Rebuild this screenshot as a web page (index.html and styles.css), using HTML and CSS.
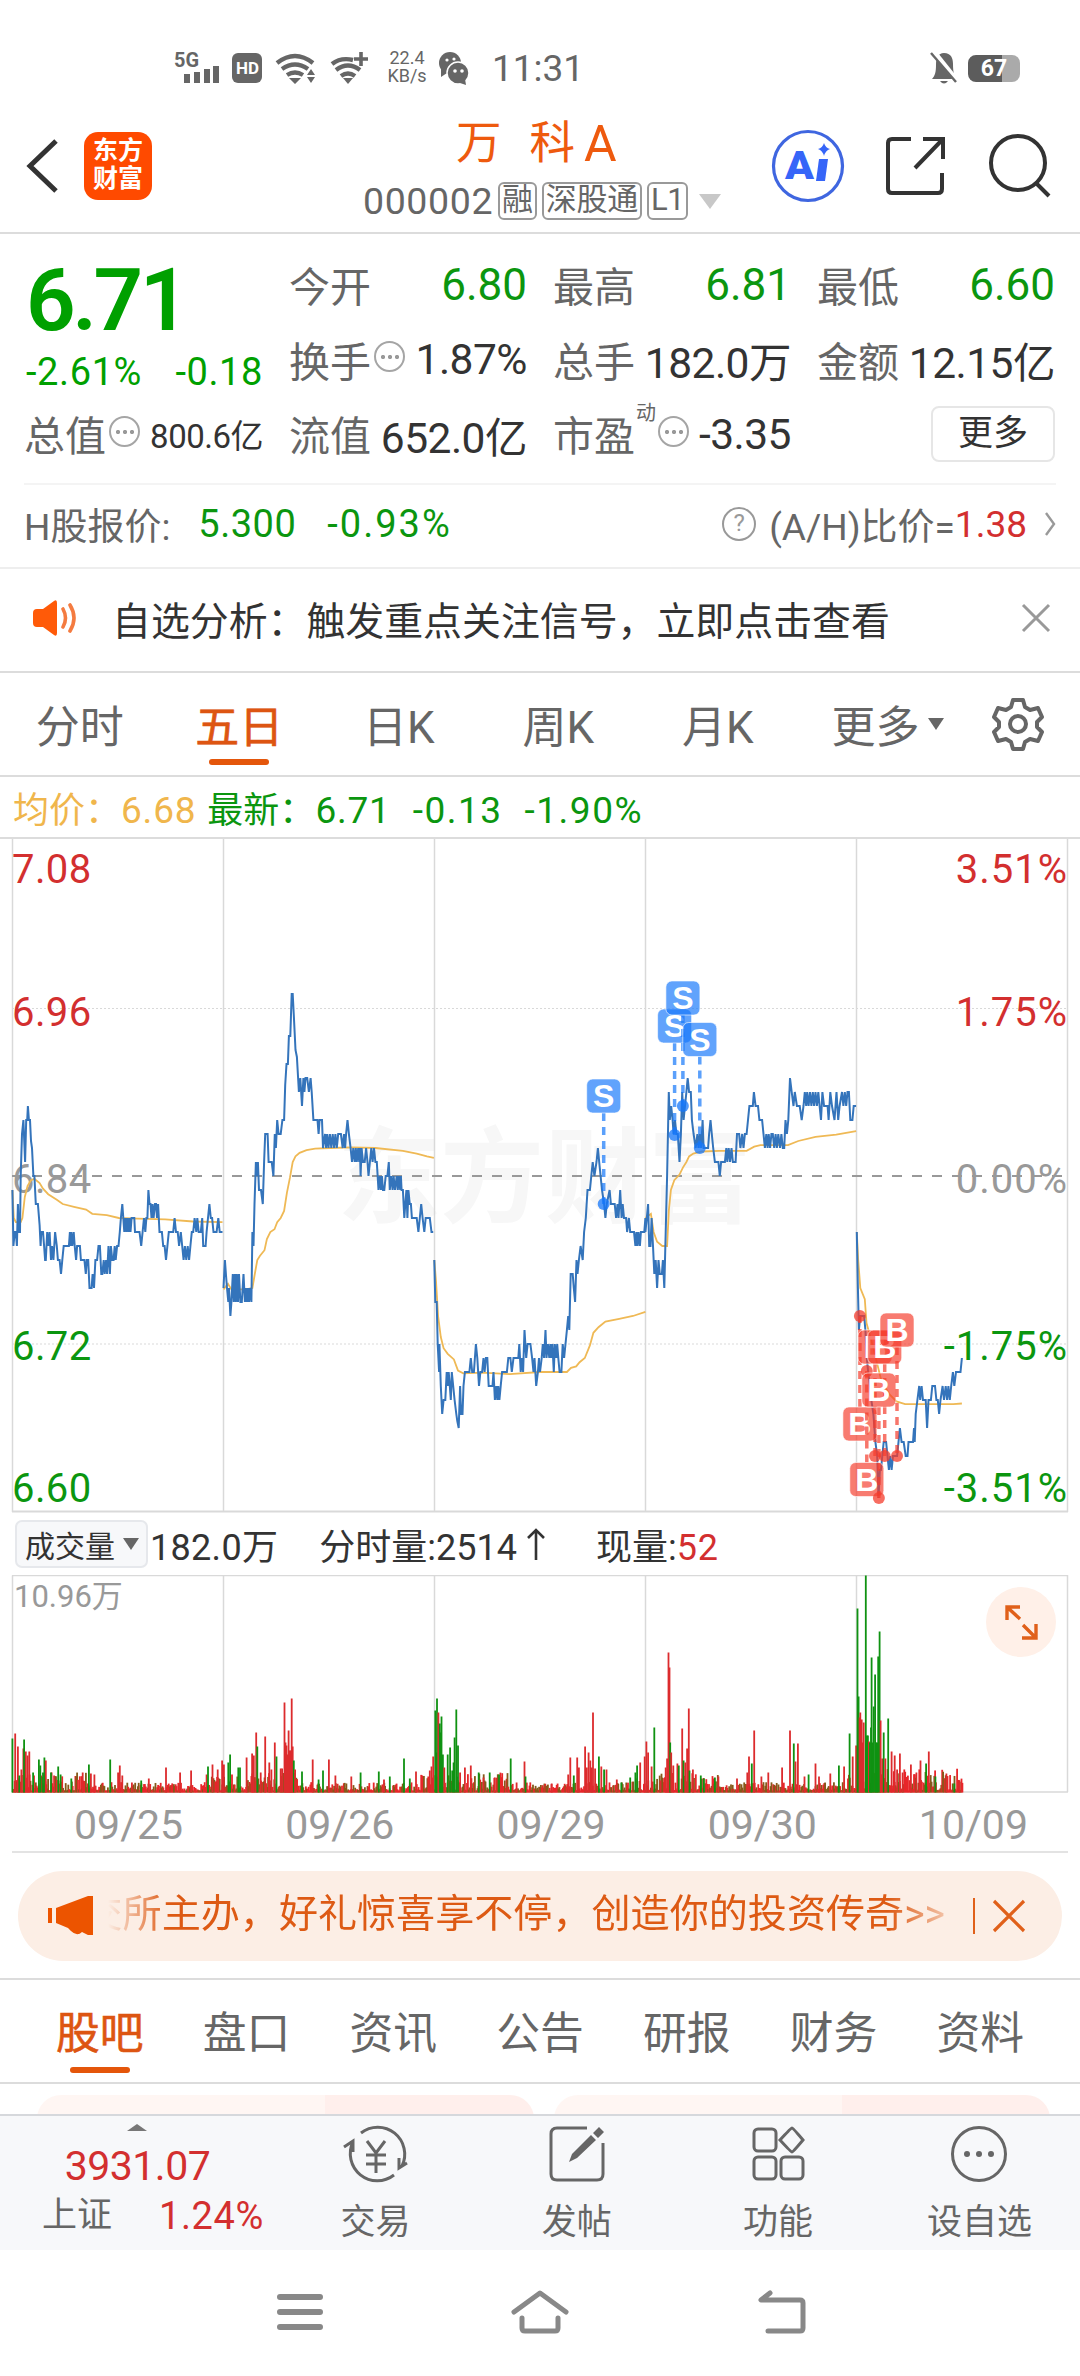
FILE: index.html
```
<!DOCTYPE html>
<html lang="zh-CN">
<head>
    <meta charset="UTF-8">
    <meta name="viewport" content="width=device-width, initial-scale=1.0">
    <title>万 科A 000002</title>
    <link rel="stylesheet" href="styles.css">
</head>
<body>
    <!-- Status bar -->
    <div class="status">
        <svg class="status-icons" width="146" height="36" viewBox="0 0 146 36" fill="#666">
            <text x="0" y="15" font-size="20" font-weight="700" textLength="25" lengthAdjust="spacingAndGlyphs">5G</text>
            <path d="M10 22h6v9h-6zM20 20h6v11h-6zM30 17h6v14h-6zM39 14h6v17h-6z"/>
            <rect x="58" y="1" width="30" height="30" rx="6"/>
            <text x="62" y="22" font-size="17" font-weight="700" fill="#fff" textLength="23" lengthAdjust="spacingAndGlyphs">HD</text>
            <path d="M103 11q18-14 36 0M108 17q13-9 26 0M113 23q8-5 16 0" fill="none" stroke="#666" stroke-width="4.4"/>
            <path d="M115 26h12l-6 6zM133 23l4-6 4 6zM133 25l4 6 4-6z"/>
        </svg>
        <svg class="status-wifi" width="40" height="36" viewBox="0 0 40 36">
            <path d="M2 12q9-7 21-4M6 18q12-9 24 0M11 24q7-5 14 0" fill="none" stroke="#666" stroke-width="4.4"/>
            <path d="M13 26h10l-5 6z" fill="#666"/>
            <path d="M31 0v14M24 7h14" stroke="#666" stroke-width="3.6"/>
        </svg>
        <div class="status-speed"><span>22.4</span><span>KB/s</span></div>
        <svg class="status-wechat" width="32" height="34" viewBox="0 0 32 34">
            <path d="M3 16v9l6-4z" fill="#666"/>
            <circle cx="12" cy="11" r="11" fill="#666"/>
            <circle cx="20" cy="21" r="11" fill="#666" stroke="#fff" stroke-width="1.5"/>
            <path d="M22 31l6 2-1-6z" fill="#666"/>
            <g fill="#fff"><circle cx="9" cy="8" r="1.6"/><circle cx="16" cy="7" r="1.6"/><circle cx="17" cy="19" r="1.8"/><circle cx="24" cy="19" r="1.8"/></g>
        </svg>
        <span class="status-time">11:31</span>
        <svg class="status-bell" width="30" height="34" viewBox="0 0 30 34">
            <path d="M14 1c7 0 9 5 9 11 0 8 1 12 4 15H2c3-3 4-7 4-14C6 6 8 1 14 1zM10 29h8q-4 5-8 0z" fill="#666"/>
            <path d="M4 0l24 30" stroke="#fff" stroke-width="5"/>
            <path d="M1 1l25 29" stroke="#666" stroke-width="2.4"/>
        </svg>
        <div class="battery">67</div>
    </div>

    <!-- Header -->
    <header class="header">
        <svg class="back" width="34" height="58" viewBox="0 0 34 58"><path d="M30 4L4 29l26 25" fill="none" stroke="#333" stroke-width="5"/></svg>
        <div class="brand">东方<br>财富</div>
        <div class="title">
            <h1>万<i></i>科<b>A</b></h1>
            <div class="code">000002<span class="tag">融</span><span class="tag">深股通</span><span class="tag">L1</span><span class="caret"></span></div>
        </div>
        <div class="header-actions">
            <svg width="74" height="74" viewBox="0 0 74 74">
                <circle cx="37" cy="37" r="34.5" fill="#fff" stroke="#3f66e0" stroke-width="3.2"/>
                <text x="14" y="50" font-size="39" font-weight="900" fill="#3665f8" textLength="29" lengthAdjust="spacingAndGlyphs">A</text>
                <path d="M48 30h9l-3 22h-9z" fill="#3665f8"/>
                <path d="M53 14q1.500 5 6 6-4.500 1.500-6 7-1.500-5.500-6-7 4.500-1 6-6z" fill="#3665f8"/>
            </svg>
            <svg width="62" height="62" viewBox="0 0 62 62" fill="none" stroke="#333" stroke-width="4">
                <path d="M26 4H7q-4 0-4 4v46q0 4 4 4h46q4 0 4-4V38M38 4h20v20M57 5L30 33"/>
            </svg>
            <svg width="66" height="66" viewBox="0 0 66 66" fill="none" stroke="#333" stroke-width="4">
                <circle cx="31" cy="30" r="27"/><path d="M49 50l13 13"/>
            </svg>
        </div>
    </header>

    <!-- Quote panel -->
    <section class="quote">
        <div class="price-box">
            <div class="price">6.71</div>
            <div class="change"><span>-2.61%</span><span>-0.18</span></div>
        </div>
        <div class="cell"><span class="label">今开</span><span class="num green">6.80</span></div>
        <div class="cell"><span class="label">最高</span><span class="num green">6.81</span></div>
        <div class="cell"><span class="label">最低</span><span class="num green">6.60</span></div>
        <div class="cell"><span class="label">换手<i class="dots"></i></span><span class="num">1.87%</span></div>
        <div class="cell"><span class="label">总手</span><span class="num">182.0万</span></div>
        <div class="cell"><span class="label">金额</span><span class="num">12.15亿</span></div>
        <div class="cell"><span class="label">总值<i class="dots"></i></span><span class="num small">800.6亿</span></div>
        <div class="cell"><span class="label">流值</span><span class="num">652.0亿</span></div>
        <div class="cell"><span class="label">市盈<sup>动</sup><i class="dots"></i></span><span class="num">-3.35</span></div>
        <div class="cell end"><button class="more-btn">更多</button></div>
    </section>

    <!-- H share row -->
    <div class="hshare">
        <span>H股报价:</span>
        <span class="green h-price">5.300</span>
        <span class="green h-pct">-0.93%</span>
        <span class="ratio"><i class="help">?</i>(A/H)比价=<em>1.38</em></span>
        <svg width="12" height="26" viewBox="0 0 12 26"><path d="M2 2l8 11-8 11" fill="none" stroke="#999" stroke-width="2.4"/></svg>
    </div>

    <!-- Notice -->
    <div class="notice">
        <svg width="48" height="38" viewBox="0 0 48 38">
            <path d="M1 14q0-4 4-4h6L22 2q3-2 3 2v30q0 4-3 2l-11-8H5q-4 0-4-4z" fill="#ff5a08"/>
            <path d="M31 10q5 9 0 18M38 6q8 13 0 26" fill="none" stroke="#f47b40" stroke-width="3.6" stroke-linecap="round"/>
        </svg>
        <span class="notice-text">自选分析：触发重点关注信号，立即点击查看</span>
        <svg width="32" height="32" viewBox="0 0 32 32"><path d="M3 3l26 26M29 3L3 29" stroke="#999" stroke-width="3"/></svg>
    </div>

    <!-- Period tabs -->
    <nav class="periods">
        <div class="period"><span class="active">分时</span></div>
        <div class="period"><span class="active on">五日</span></div>
        <div class="period">日K</div>
        <div class="period">周K</div>
        <div class="period">月K</div>
        <div class="drop">更多</div>
        <svg width="54" height="54" viewBox="0 0 54 54" fill="none" stroke="#666" stroke-width="4" stroke-linejoin="round">
            <path d="M22 3h10l2 7 5 3 8-2 4 9-5 5v5l5 5-4 9-8-2-5 3-2 7H22l-2-7-5-3-8 2-4-9 5-5v-5l-5-5 4-9 8 2 5-3z"/>
            <circle cx="27" cy="27" r="8"/>
        </svg>
    </nav>

    <div class="summary">
        <span class="avg">均价：<b>6.68</b></span>
        <span class="green">最新：<b>6.71</b><b>-0.13</b><b>-1.90%</b></span>
    </div>

    <!-- Price chart -->
    <svg class="chart" id="priceChart" width="1080" height="674" viewBox="0 0 1080 674">
        <g class="watermark"><text x="337" y="376">东</text><text x="440" y="376">方</text><text x="545" y="376">财</text><text x="648" y="376">富</text></g>
        <path class="grid" d="M12.500 0V673M223.500 0V673M434.500 0V673M645.500 0V673M856.500 0V673M1067.500 0V673"/>
        <path class="grid bottom" d="M12 672.500H1068"/>
        <path class="grid dotted" d="M12 169.500H1068M12 505H1068"/>
        <g class="axis">
            <text class="up" x="12" y="44">7.08</text>
            <text class="up" x="12" y="187">6.96</text>
            <text class="flat" x="12" y="354">6.84</text>
            <text class="down" x="12" y="521">6.72</text>
            <text class="down" x="12" y="663">6.60</text>
        </g>
        <g class="axis right">
            <text class="up" x="1068" y="44">3.51%</text>
            <text class="up" x="1068" y="187">1.75%</text>
            <text class="flat" x="1068" y="354">0.00%</text>
            <text class="down" x="1068" y="521">-1.75%</text>
            <text class="down" x="1068" y="663">-3.51%</text>
        </g>
        <path class="zero" d="M12 337H1068"/>
    </svg>

    <!-- Volume -->
    <div class="vol-head">
        <span class="vol-btn">成交量</span>
        <span class="v1">182.0万</span>
        <span class="v2">分时量:2514</span>
        <svg width="20" height="34" viewBox="0 0 20 34"><path d="M10 33V3M2 11l8-8 8 8" fill="none" stroke="#333" stroke-width="2.600"/></svg>
        <span class="v3">现量:<em>52</em></span>
    </div>
    <div class="volume">
        <svg class="chart" id="volumeChart" width="1080" height="218" viewBox="0 0 1080 218">
            <path class="grid" d="M12.500 .5V217M223.500 0V217M434.500 0V217M645.500 0V217M856.500 0V217M1067.500 0V217M12 .5H1068M12 217H1068"/>
            <text class="vol-max" x="14" y="32">10.96万</text>
        </svg>
        <div class="expand">
            <svg width="36" height="36" viewBox="0 0 36 36" fill="none" stroke="#e0601a" stroke-width="3.400">
                <path d="M17 3H4v13M4 3l13 12M19 34h14V20M33 34L20 21"/>
            </svg>
        </div>
    </div>
    <div class="dates"><span>09/25</span><span>09/26</span><span>09/29</span><span>09/30</span><span>10/09</span></div>

    <!-- Promo banner -->
    <div class="banner">
        <svg width="46" height="42" viewBox="0 0 46 42" fill="#ec5400"><path d="M0 13h4v15H0zM8 13L40 1h5v39h-5l-6-3q-5 5-11-1l-3-3-12-5z"/></svg>
        <div class="marquee"><span>交所主办，好礼惊喜享不停，创造你的投资传奇&gt;&gt;</span></div>
        <i class="bar"></i>
        <svg width="34" height="34" viewBox="0 0 34 34"><path d="M2 2l30 30M32 2L2 32" stroke="#e0601a" stroke-width="3.200"/></svg>
    </div>

    <!-- Content tabs -->
    <nav class="tabs">
        <span class="active on">股吧</span>
        <span>盘口</span>
        <span>资讯</span>
        <span>公告</span>
        <span>研报</span>
        <span>财务</span>
        <span>资料</span>
    </nav>
    <div class="cards"><div class="card"></div><div class="card"></div></div>

    <!-- Bottom bar -->
    <footer class="toolbar">
        <div class="index">
            <i class="up-caret"></i>
            <div class="index-value">3931.07</div>
            <div class="index-row"><span>上证</span><em>1.24%</em></div>
        </div>
        <div class="tool">
            <svg width="70" height="62" viewBox="0 0 70 62" fill="none" stroke="#666" stroke-width="3">
                <path d="M20 10A27 27 0 0 1 61 43M53 52A27 27 0 0 1 12 19M3 24l9-6v11M58 35v10l8-5"/>
                <path d="M26 18l9 12 9-12M35 30v20M25 32h20M25 41h20"/>
            </svg>
            <span>交易</span>
        </div>
        <div class="tool">
            <svg width="60" height="62" viewBox="0 0 60 62" fill="none" stroke="#666" stroke-width="3">
                <path d="M40 5H10q-6 0-6 6v40q0 6 6 6h40q6 0 6-6V20"/>
                <path d="M22 39l3-8L44 12l5 5-19 18zM46 10l6-6 5 5-6 6z" fill="#666" stroke="none"/>
            </svg>
            <span>发帖</span>
        </div>
        <div class="tool">
            <svg width="56" height="62" viewBox="0 0 56 62" fill="none" stroke="#666" stroke-width="3">
                <rect x="4" y="6" width="22" height="22" rx="4"/>
                <rect x="4" y="34" width="22" height="22" rx="4"/>
                <rect x="31" y="34" width="22" height="22" rx="4"/>
                <path d="M42 5q1 0 11 12-10 12-11 12-1 0-12-12Q41 5 42 5z"/>
            </svg>
            <span>功能</span>
        </div>
        <div class="tool">
            <svg width="60" height="62" viewBox="0 0 60 62">
                <circle cx="30" cy="31" r="26.500" fill="none" stroke="#666" stroke-width="3"/>
                <g fill="#666"><circle cx="18" cy="31" r="3"/><circle cx="30" cy="31" r="3"/><circle cx="42" cy="31" r="3"/></g>
            </svg>
            <span>设自选</span>
        </div>
    </footer>

    <!-- System navigation -->
    <div class="sysnav">
        <svg width="48" height="44" viewBox="0 0 48 44"><path d="M4 7h40M4 22h40M4 37h40" stroke="#888" stroke-width="6" stroke-linecap="round"/></svg>
        <svg width="60" height="46" viewBox="0 0 60 46" fill="none" stroke="#888" stroke-width="5" stroke-linecap="round" stroke-linejoin="round"><path d="M4 23L30 4l26 19M12 29v10q0 3 3 3h30q3 0 3-3V29"/></svg>
        <svg width="50" height="46" viewBox="0 0 50 46" fill="none" stroke="#888" stroke-width="5" stroke-linecap="round" stroke-linejoin="round"><path d="M14 4L5 11h39q3 0 3 3v25q0 3-3 3H12"/></svg>
    </div>

    <script src="charts.js"></script>
</body>
</html>
```
FILE: styles.css
```
:root {
    --text: #333;
    --muted: #666;
    --grey: #999;
    --orange: #e4560b;
    --green: #0b960f;
    --red: #d32f2f;
    --line: #dcdcdc;
}

* {
    margin: 0;
    padding: 0;
    box-sizing: border-box;
}

body {
    width: 1080px;
    height: 2376px;
    font-family: Roboto, "Noto Sans CJK SC", sans-serif;
    background: #fff;
    color: var(--text);
    overflow: hidden;
}

svg {
    display: block;
    flex: none;
}

i, em {
    font-style: normal;
}

em {
    color: var(--red);
}

.green {
    color: var(--green);
}

/* Status bar */
.status {
    height: 110px;
    padding: 52px 60px 0 174px;
    display: flex;
    align-items: flex-start;
    color: var(--muted);
}

.status-wifi {
    margin-left: 10px;
}

.status-speed {
    display: flex;
    flex-direction: column;
    width: 40px;
    margin-left: 17px;
    font-size: 18px;
    line-height: 18px;
    margin-top: -3px;
    text-align: center;
}

.status-wechat {
    margin-left: 11px;
}

.status-time {
    margin-left: 22px;
    font-size: 37px;
    line-height: 34px;
}

.status-bell {
    margin-left: auto;
}

.battery {
    width: 52px;
    height: 27px;
    margin: 3px 0 0 8px;
    border-radius: 8px;
    background: linear-gradient(90deg, #5c5c5c 66%, #aaa 66%);
    color: #fff;
    font-size: 23px;
    font-weight: 700;
    line-height: 28px;
    text-align: center;
}

/* Header */
.header {
    height: 124px;
    display: flex;
    align-items: center;
    padding: 0 27px 10px 26px;
    border-bottom: 2px solid var(--line);
}

.brand {
    width: 68px;
    height: 68px;
    margin-left: 24px;
    border-radius: 14px;
    background: #ff4a00;
    color: #fff;
    font-size: 25px;
    font-weight: 700;
    line-height: 28px;
    text-align: center;
    padding-top: 5px;
}

.title {
    width: 380px;
    margin-left: 211px;
    align-self: flex-start;
    white-space: nowrap;
}

.title h1 {
    display: flex;
    height: 68px;
    padding-left: 93px;
    color: #ee5a0e;
    font-size: 45.5px;
    font-weight: 400;
    line-height: 68px;
}

.title h1 i {
    width: 28px;
}

.title h1 b {
    font-weight: 400;
    margin-left: 9px;
    font-size: 50px;
}

.code {
    display: flex;
    align-items: center;
    height: 46px;
    font-size: 37.5px;
    letter-spacing: .6px;
    color: var(--muted);
}

.tag {
    height: 38px;
    margin-left: 5px;
    padding: 0 2px;
    border: 2px solid #999;
    border-radius: 6px;
    font-size: 31px;
    line-height: 32px;
    letter-spacing: -.3px;
}

.caret {
    margin-left: 11px;
    border: 11px solid transparent;
    border-top: 15px solid #c8c8c8;
    border-bottom: 0;
}

.header-actions {
    display: flex;
    align-items: center;
    gap: 40px;
    margin-left: auto;
}

/* Quote panel */
.quote {
    display: grid;
    grid-template-columns: 239px 238px 238px 238px;
    grid-template-rows: repeat(3, 74.5px);
    column-gap: 26px;
    height: 249px;
    padding: 14px 24px 0;
}

.price-box {
    grid-row: 1 / 3;
    color: #00a000;
}

.price {
    height: 99px;
    padding-left: 2px;
    font-size: 87px;
    font-weight: 600;
    line-height: 104px;
    letter-spacing: -3.5px;
}

.change {
    display: flex;
    justify-content: space-between;
    padding-left: 2px;
    font-size: 38px;
    line-height: 50px;
    letter-spacing: .6px;
}

.cell {
    display: flex;
    align-items: center;
    justify-content: space-between;
    white-space: nowrap;
}

.cell.end {
    justify-content: flex-end;
}

.label {
    display: flex;
    align-items: center;
    padding-bottom: 2px;
    color: var(--muted);
    font-size: 41px;
}

.label sup {
    align-self: flex-start;
    font-size: 20px;
    line-height: 20px;
    margin: 0 0 0 1px;
}

.label sup + .dots {
    margin-left: 2px;
}

.dots {
    width: 31px;
    height: 31px;
    margin: -4px 0 0 3px;
    border: 2px solid #a5a5a5;
    border-radius: 50%;
    background:
        radial-gradient(circle at 7px 14px, #999 1.8px, transparent 2.4px),
        radial-gradient(circle at 14px 14px, #999 1.8px, transparent 2.4px),
        radial-gradient(circle at 21px 14px, #999 1.8px, transparent 2.4px);
}

.num {
    font-size: 42.5px;
    letter-spacing: -.5px;
}

.num.green {
    font-size: 44px;
    letter-spacing: 0;
}

.num.small {
    font-size: 33px;
}

.more-btn {
    width: 124px;
    height: 56px;
    border: 2px solid #e6e6e6;
    border-radius: 8px;
    background: #fff;
    color: var(--text);
    font-family: inherit;
    font-size: 35px;
    line-height: 50px;
}

/* H share row */
.hshare {
    display: flex;
    align-items: center;
    height: 84px;
    margin: 0 24px;
    padding-bottom: 4px;
    border-top: 2px solid #f4f4f4;
    color: var(--muted);
    font-size: 37px;
}

.h-price {
    margin-left: 28px;
    font-size: 38px;
    letter-spacing: .5px;
}

.h-pct {
    margin-left: 31px;
    font-size: 38px;
    letter-spacing: 2px;
}

.ratio {
    display: flex;
    align-items: center;
    margin: 0 17px 0 auto;
}

.help {
    width: 34px;
    height: 34px;
    margin-right: 13px;
    border: 2.5px solid var(--grey);
    border-radius: 50%;
    color: var(--grey);
    font-size: 24px;
    line-height: 29px;
    text-align: center;
}

/* Notice */
.notice {
    display: flex;
    align-items: center;
    height: 106px;
    padding: 0 28px 4px 32px;
    border-top: 2px solid #eee;
    border-bottom: 2px solid var(--line);
    font-size: 38.9px;
}

.notice-text {
    flex: 1;
    margin-left: 32px;
}

/* Period tabs */
.periods {
    display: flex;
    align-items: center;
    height: 104px;
    border-bottom: 2px solid var(--line);
    color: var(--muted);
    font-size: 44px;
}

.period {
    width: 159.5px;
    text-align: center;
}

.periods svg {
    margin-left: 47px;
}

.active {
    position: relative;
}

.on {
    color: #dd5512;
    -webkit-text-stroke: .6px #dd5512;
}

.on::after {
    content: '';
    position: absolute;
    left: 50%;
    bottom: -11px;
    width: 60px;
    height: 6px;
    margin-left: -30px;
    border-radius: 3px;
    background: var(--orange);
}

.drop {
    display: flex;
    align-items: center;
    margin-left: 34px;
}

.drop::after,
.vol-btn::after {
    content: '';
    margin-left: 8px;
    border: 8px solid transparent;
    border-top: 12px solid #666;
    border-bottom: 0;
}

.summary {
    display: flex;
    align-items: center;
    gap: 11px;
    height: 62px;
    padding-left: 13px;
    border-bottom: 2px solid var(--line);
    font-size: 36px;
}

.summary b {
    font-weight: 400;
    font-size: 37px;
    letter-spacing: .8px;
}

.summary b + b {
    margin-left: 22px;
    letter-spacing: 1.5px;
}

.avg {
    color: #f0b64c;
}

/* Charts */
.chart .grid {
    fill: none;
    stroke: #d9d9d9;
    stroke-width: 1.5;
}

.chart .bottom {
    stroke-width: 2;
}

.chart .dotted {
    stroke-width: 1;
    stroke-dasharray: 2 2;
}

.chart .zero {
    stroke: #999;
    stroke-width: 2;
    stroke-dasharray: 10 10;
}

.watermark {
    font-size: 104px;
    font-weight: 700;
    fill: #f7f7f7;
}

.axis {
    font-size: 40px;
    letter-spacing: .4px;
}

.right {
    text-anchor: end;
    letter-spacing: 1px;
}

.up { fill: var(--red); }
.down { fill: var(--green); }
.flat { fill: #999; }

.price-line {
    fill: none;
    stroke: #3474bb;
    stroke-width: 2;
}

.avg-line {
    fill: none;
    stroke: #efb955;
    stroke-width: 1.8;
}

.mark-s { fill: #1677fa; stroke: #1677fa; }
.mark-b { fill: #f43c2c; stroke: #f43c2c; }

.mark-box {
    fill-opacity: .68;
    stroke: #fff;
    stroke-opacity: .6;
}

.mark-dot {
    fill-opacity: .75;
    stroke: none;
}

.mark-line {
    stroke-width: 3.5;
    stroke-opacity: .7;
    stroke-dasharray: 8 6;
}

.mark-text {
    fill: #fff;
    stroke: none;
    font-family: "Liberation Sans", sans-serif;
    font-size: 32px;
    font-weight: 700;
    text-anchor: middle;
}

/* Volume */
.vol-head {
    display: flex;
    align-items: center;
    height: 62px;
    padding-left: 15px;
    font-size: 36px;
    white-space: nowrap;
}

.vol-btn {
    display: flex;
    align-items: center;
    width: 133px;
    height: 48px;
    padding-left: 8px;
    border: 2px solid #e6e8ec;
    border-radius: 7px;
    background: #f7f8fa;
    font-size: 30px;
}

.v1 {
    margin-left: 2px;
    letter-spacing: .3px;
}

.v2 {
    margin-left: 41px;
}

.v3 {
    margin-left: 50px;
}

.v3 em {
    letter-spacing: 1px;
}

.vol-head svg {
    margin-left: 9px;
}

.volume {
    position: relative;
    height: 218px;
}

.vol-max {
    fill: #999;
    font-size: 31px;
}

.expand {
    position: absolute;
    right: 24px;
    top: 12px;
    display: flex;
    align-items: center;
    justify-content: center;
    width: 70px;
    height: 70px;
    border-radius: 50%;
    background: #fff0e8;
}

.dates {
    display: flex;
    height: 60px;
    margin: 0 12px;
    border-bottom: 2px solid #e3e3e3;
    color: var(--grey);
    font-size: 41px;
    line-height: 64px;
}

.dates span {
    flex: 1;
    padding-left: 22px;
    text-align: center;
}

/* Promo banner */
.banner {
    display: flex;
    align-items: center;
    height: 90px;
    margin: 18px 18px 17px;
    padding: 0 36px 0 30px;
    border-radius: 45px;
    background: #fceee5;
    color: #dd5a14;
    font-size: 39.1px;
}

.marquee {
    display: flex;
    justify-content: flex-end;
    width: 838px;
    height: 90px;
    margin-left: 14px;
    overflow: hidden;
    line-height: 86px;
    white-space: nowrap;
    -webkit-mask-image: linear-gradient(90deg, transparent, #000 60px, #000 780px, rgba(0, 0, 0, .3));
    mask-image: linear-gradient(90deg, transparent, #000 60px, #000 780px, rgba(0, 0, 0, .3));
}

.banner .bar {
    width: 2px;
    height: 36px;
    margin: 0 17px 0 28px;
    background: #e0601a;
}

/* Content tabs */
.tabs {
    display: flex;
    justify-content: space-between;
    align-items: center;
    height: 106px;
    padding: 0 56px 3px;
    border-top: 2px solid var(--line);
    border-bottom: 2px solid var(--line);
    color: var(--muted);
    font-size: 43.8px;
}

.cards {
    display: flex;
    gap: 20px;
    height: 30px;
    padding: 11px 30px 0 37px;
    overflow: hidden;
}

.card {
    width: 497px;
    height: 60px;
    border-radius: 24px;
    background: linear-gradient(90deg, #fff6f3 58%, #ffefec 58%);
}

/* Bottom bar */
.toolbar {
    display: flex;
    height: 136px;
    border-top: 2px solid #d6d8dc;
    background: #f7f8fa;
    color: var(--muted);
    font-size: 35px;
}

.index {
    display: flex;
    flex-direction: column;
    align-items: center;
    width: 275px;
    padding-top: 8px;
}

.up-caret {
    border: 10px solid transparent;
    border-bottom: 7px solid #777;
    border-top: 0;
}

.index-value {
    color: var(--red);
    font-size: 41px;
    line-height: 46px;
    margin-top: 12px;
    letter-spacing: -.5px;
}

.index-row {
    display: flex;
    gap: 47px;
    line-height: 54px;
    padding-left: 31px;
}

.index-row em {
    font-size: 38px;
    letter-spacing: .6px;
}

.tool {
    display: flex;
    flex-direction: column;
    align-items: center;
    width: 201.3px;
    padding-top: 7px;
}

.tool span {
    margin-top: 14px;
    line-height: 48px;
}

/* System navigation */
.sysnav {
    display: flex;
    justify-content: space-between;
    align-items: center;
    height: 126px;
    padding: 0 274px 2px 276px;
}
```
FILE: charts.js
```
// Every series is a list of "x:value" pairs. x counts along half of the
// canvas (1568 units for 540px), prices are cents above 6.00.
const UNIT = 540 / 1568;
const NS = 'http://www.w3.org/2000/svg';

const priceLines = [
    [0, '36:83 39:79 43:80 46:80 49:79 52:82 55:80 58:80 60:84 64:87 68:88 73:85 76:88 79:88 81:89 84:88 87:88 90:86.5 93:86 97:84 100:84 104:82 110:82 115:80.5 118:79 120:80 125:80 128:79 131:78 133:78 137:80 140:79 144:80 148:78 151:79 155:78 160:80 165:79 168:78 173:78 177:77 181:78 185:79 200:79 203:80 205:79 207:80 210:79 214:80 217:79 221:78 224:79 232:79 235:78 245:78 249:77 252:78 256:78 260:76 266:76 269:77 273:76 277:78 282:78 286:79 290:79 294:77 297:77 301:78 304:77 308:78 311:77 315:79 319:77 322:79 326:78 330:78 333:79 336:78 340:79 344:79 348:80 351:81 355:82 358:81 361:80 364:81 367:80 370:81 373:80 376:81 379:80 382:81 386:81 390:81 392:80 405:80 410:79 414:80 418:81 422:80 425:81 428:81 431:83 434:82 437:82 440:81 443:82 446:81 450:82 453:82 456:81 459:82 463:80 470:80 474:79 478:79 482:78 486:79 490:80 503:80 507:81 511:80 516:80 520:79 525:80 529:79 533:78 537:79 541:78 545:79 549:78 553:79 557:80 561:80 565:81 570:80 573:81 577:80 583:80 587:81 590:79 597:79 600:80 604:81 608:82 612:81 616:81 620:80 629:80 634:81 638:80 646:80'],
    [0, '649:76 653:78 656:77 659:76 663:75 665:76 669:74 672:75 676:77 679:75 682:77 685:75 688:77 691:75 694:77 698:75 702:75 707:77 711:75 714:76 717:75 720:76 723:75 726:76 730:75 733:80 736:79 739:82 743:85 746:84 749:85 752:83 758:83 763:82 767:85 770:87 777:87 780:85 789:85 794:84 798:87 801:86 805:88 809:87 815:87 820:88 825:88 828:90.5 832:92 836:92 839:94 843:94 847:97 850:97 853:95.500 858:93 862:92.500 868:90 872:91 877:89 881:91 884:90 887:91 892:91 897:90 902:91 905:90 910:88 922:88 925:87 928:88 935:88 938:86 944:87 947:86 950:87 954:86 958:87 962:86 966:87 970:86 974:87 978:86 982:87 990:87 995:86 999:87 1002:86 1005:87 1009:88 1013:87 1018:86 1022:85 1026:86 1030:85 1033:86 1036:85 1040:86 1043:85 1045:86 1047:84 1050:86 1054:85 1059:85 1063:86 1067:85 1070:84 1074:85 1078:86 1082:85 1086:86 1090:85 1094:85 1099:83 1103:84 1106:83 1109:84 1112:83 1116:83 1120:84 1125:84 1129:85 1132:83 1136:84 1140:83 1143:84 1147:83 1152:84 1155:83 1158:84 1162:83 1164:84 1166:83 1170:83 1174:81 1177:82 1180:83 1183:81 1186:83 1190:82 1193:82 1196:81 1210:81 1215:80 1219:81 1223:82 1227:81 1232:80 1236:81 1248:81 1253:80 1258:80'],
    [0, '1261:78 1264:75 1268:75 1271:72 1275:70 1276:72 1280:69 1284:67 1288:68 1293:68 1297:70 1300:69 1303:70 1306:69 1309:68 1312:70 1316:69 1320:68 1325:67 1328:66.5 1332:66 1336:69 1339:67 1343:67 1346:69 1350:70 1363:70 1367:71 1371:70 1376:70 1382:72 1386:71 1391:69 1395:70 1400:70 1404:71 1407:70 1411:71 1415:71 1419:69 1430:69 1433:70 1437:68 1441:69 1444:68 1447:69 1450:68 1454:69 1458:70 1472:70 1476:71 1482:71 1486:70 1491:71 1505:71 1508:72 1512:70 1515:71 1519:70 1523:73 1528:71 1532:72 1540:72 1545:71 1549:70 1552:71 1557:69 1562:70 1565:71 1568:70'],
    [1, '0:70 5:71 8:72 12:71 16:73 19:71 23:72 27:71 30:72 33:71 36:72 40:70 43:72 47:71 50:72 53:71 57:70 62:70 66:72 70:71 74:72 78:73 82:74 85:73 89:77 95:77 98:76 102:75 106:78 109:77 113:78 118:79 124:78 128:80 133:81 138:83 145:83 149:84 153:85 158:84 164:85 168:86 172:85 176:84 180:83 186:82 190:81 194:82 202:83 206:82 217:82 221:81 225:82 228:81 233:83 237:81 240:82 244:81 250:81 253:80 258:81 262:80 273:80 277:79 280:80 283:79 286:80 290:79 293:80 303:80 306:81'],
    [1, '306:80 310:81 314:82 317:79 321:79 324:81 328:79 332:77 336:78 340:76 344:78 348:77 354:77 357:78 361:76 365:80 369:84 374:90 377:88 381:89 385:88 388:87 392:88 396:87 400:87 405:85 409:87 413:90 417:88 421:89 425:90 429:91 433:90 438:90 441:88 446:87 452:86 457:87 460:86 464:87 468:86 472:88 475:86 488:86 491:87 495:88 499:87 503:86 508:85 514:85 518:85 522:84 526:85 537:85 541:86 544:85 548:86 552:85 556:86 560:85 568:85 572:87 578:87 582:86 587:87 591:86 595:87 600:87 604:88 608:89 614:89 618:89 621:90 626:89 633:89 637:88 645:88 649:87 653:86 657:87 661:86 664:87 668:86 672:87 676:87 680:86 684:87 688:86 692:87 697:86 701:87 705:86 709:86 713:88 717:87 721:88 726:91 731:90 736:89 740:90 746:89 754:89 760:88 765:89 769:90 773:89 776:90 780:89 784:90 788:89 792:90 796:89 800:90 804:89 808:90 812:89 816:88 820:90 825:89 835:89 838:88 843:90 848:89 855:88 861:90 866:88 870:89 877:90 881:89 885:90 889:89 893:90 897:90 901:88 907:88 911:89 918:89'],
    [1, '920:80 923:76 926:73 930:74 936:74 941:74 945:73 949:71 953:70 958:69 962:68 968:67 974:65 979:64 983:61 987:63 990:63 994:64 998:65 1005:65 1009:64 1013:63 1017:64 1021:63 1025:64 1037:64 1041:65 1045:66 1050:65 1056:65 1062:64 1067:64 1070:65 1083:65 1086:66 1088:65 1091:67 1096:68 1101:69 1104:68 1108:69 1112:68 1120:68 1124:66 1128:68 1135:68 1139:69 1147:69 1151:68 1155:68 1159:67 1163:68 1169:69 1173:68 1178:69 1182:68 1186:69 1190:68 1194:69 1199:70 1203:69 1208:70 1221:70 1225:71']
];

const avgLines = [
    [0, '36:83 40:81 46:80.7 60:80.7 65:81 72:82.5 80:83.3 90:83.7 100:83.8 115:83.5 125:83.1 140:82.7 165:82.3 182:82 215:81.8 250:81.6 268:81.3 310:81.2 345:81 400:80.95 480:80.9 560:80.75 646:80.7'],
    [0, '649:75.9 662:76.3 672:75.9 715:75.9 733:76 740:77 747:78 755:78.3 768:78.7 775:79.5 785:80 797:80.2 805:80.7 815:81 825:81.5 833:82.8 842:83.9 850:85 858:85.4 870:85.65 890:85.85 915:85.95 960:86 1020:86.05 1090:86 1170:85.8 1210:85.6 1240:85.4 1260:85.3'],
    [0, '1261:78 1266:76.5 1272:74 1280:72.5 1288:71.7 1300:71.3 1318:70.9 1330:70.1 1345:69.9 1400:69.95 1480:69.85 1568:70'],
    [1, '0:70 78:70 90:70.3 105:70.4 115:70.7 130:71 145:71.9 155:72.8 170:73.2 190:73.6 230:73.8 270:74 306:74.3'],
    [1, '306:81 322:81.3 330:80 340:79.3 355:79 369:79 374:81.5 380:83 390:83.7 405:84.1 415:84.6 425:85 433:85.4 445:85.6 470:85.75 520:85.8 600:85.8 622:86.1 640:86.2 720:86.2 750:86.5 800:86.8 860:86.95 918:87.2'],
    [1, '920:80 924:78 930:76 943:75.2 948:73.5 957:72.7 970:71.5 980:70.5 990:69.5 1000:69 1015:68.4 1035:67.9 1060:67.7 1200:67.7 1225:67.75']
];

// Trades: type, x, label centre, dot
const marks = [
    ['s', 603.7, 257, 365],
    ['s', 674.6, 187, 296],
    ['s', 682.9, 159, 267],
    ['s', 699.8, 200.5, 309],
    ['b', 859.9, 585, 477],
    ['b', 866.8, 640.5, 532],
    ['b', 875, 508, 617],
    ['b', 884.7, 508, 617],
    ['b', 878.9, 551, 659],
    ['b', 897, 491, 617]
];

// Larger volume bars: x:height, g = falling, r = rising
const bars = [
    [0, '36:54g 44:59r 52:46r 56:17g 62:23r 68:44r 70:53g 75:41r 80:37r 85:41r 96:20g 113:33g 117:27g 125:20g 129:35g 133:32r 148:20g 157:17r 169:26g 176:18g 207:14g 240:20r 258:28g 264:19r 274:18r 320:33g 343:20r 348:27r 355:17r 383:10r 410:12g 432:14r 482:25r 523:20r 555:22r 600:18r 604:26g 617:28r 632:23r 645:32r'],
    [0, '650:28r 663:30g 668:38g 692:25g 697:25g 716:35r 732:39r 737:37r 744:60r 747:46g 757:20r 770:56r 782:30r 788:23r 798:50r 803:36g 815:24r 819:24r 826:90r 829:50r 832:47r 835:38r 838:62r 841:42r 844:42r 847:94r 850:46r 853:32g 857:23r 877:21g 908:33r 925:13g 938:22g 955:33r 974:17r 1020:16r 1047:20g 1100:21g 1115:13r 1132:16g 1173:34g 1190:14g 1208:21r 1248:22r 1253:26r 1258:36r'],
    [0, '1264:82g 1267:40g 1269:94g 1273:80r 1277:69g 1280:60g 1282:76g 1286:38g 1290:25r 1300:38g 1307:45g 1313:22g 1317:30g 1320:55g 1325:83g 1330:47g 1336:20r 1350:25r 1367:27r 1390:20g 1404:15r 1422:20g 1437:15r 1449:18g 1483:34g 1500:10r 1523:31r 1526:16g'],
    [1, '34:9r 82:18r 88:35r 98:17g 108:35r 113:25r 131:46r 136:25r 141:40r 146:32r 150:25r 154:80r 160:24r 171:36g 178:26r 186:23g 193:23r 223:13r 236:10g 262:15g 277:20g 282:27g 291:30r 304:36r'],
    [1, '309:51r 314:40r 324:26r 332:65g 350:12r 365:25r 369:34r 373:140r 376:125r 378:50g 381:40r 387:27r 399:29r 403:27g 413:64r 417:32g 422:30r 427:44r 432:84r 434:22g 444:23r 467:17g 476:14g 508:15g 518:16r 572:14r 602:20r 607:36r 615:29g 622:62r 643:16r 663:20r 703:25r 726:62r 737:49g 742:31r 749:49r 768:16r 780:18g 800:29r 810:16r 843:19r 868:27g 883:26r 899:59g 908:36r 918:47r'],
    [1, '922:184g 925:96g 928:75r 930:80r 934:73r 937:50r 940:70r 946:217g 949:57g 952:57g 955:51r 958:50g 961:65g 963:135g 966:50g 969:86g 973:118g 976:50g 979:50g 982:136g 986:161g 989:72r 994:34r 998:60g 1003:34r 1011:74g 1021:41r 1030:37r 1037:23r 1045:39r 1053:20r 1077:28r 1093:20r 1105:32r 1121:29g 1129:41r 1148:16g 1180:19r 1203:9g 1218:12r']
];

function add(parent, tag, attrs, text) {
    const el = document.createElementNS(NS, tag);
    for (const key in attrs) el.setAttribute(key, attrs[key]);
    if (text) el.textContent = text;
    parent.appendChild(el);
    return el;
}

function toX(half, x) {
    return half * 540 + x * UNIT;
}

function drawLines(svg, lines, cls) {
    lines.forEach(([half, data]) => {
        const points = data.split(' ').map((pair) => {
            const [x, p] = pair.split(':').map(Number);
            return toX(half, x).toFixed(1) + ',' + (337 - (p - 84) * 14).toFixed(1);
        });
        add(svg, 'polyline', { class: cls, points: points.join(' ') });
    });
}

const priceSvg = document.getElementById('priceChart');
drawLines(priceSvg, avgLines, 'avg-line');
drawLines(priceSvg, priceLines, 'price-line');

marks.forEach(([type, x, label, dot]) => {
    const g = add(priceSvg, 'g', { class: 'mark-' + type });
    const edge = label + (dot > label ? 17 : -17);
    add(g, 'line', { class: 'mark-line', x1: x, x2: x, y1: edge, y2: dot });
    add(g, 'circle', { class: 'mark-dot', cx: x, cy: dot, r: 6 });
    add(g, 'rect', { class: 'mark-box', x: x - 17, y: label - 17, width: 34, height: 34, rx: 6 });
    add(g, 'text', { class: 'mark-text', x: x, y: label + 11 }, type.toUpperCase());
});

const volSvg = document.getElementById('volumeChart');

function drawBar(x, h, color) {
    add(volSvg, 'rect', { x: x.toFixed(1), y: 217.5 - h, width: 1.8, height: h, fill: color });
}

// Quiet minutes between the larger trades
let seed = 7;
function random() {
    seed = (seed * 16807) % 2147483647;
    return seed / 2147483647;
}

for (let x = 12; x < 962; x += 0.88) {
    const minute = ((x - 12) % 211.1) / 211.1;
    const busy = x > 856 ? 1.6 : minute < 0.35 || minute > 0.93 ? 1.3 : 0.6;
    const h = 2 + Math.pow(random(), 2) * 14 * busy;
    drawBar(x, h, random() < 0.6 ? '#e8262a' : '#86591a');
}

bars.forEach(([half, data]) => {
    data.split(' ').forEach((pair) => {
        const [x, value] = pair.split(':');
        drawBar(toX(half, Number(x)) - 0.9, parseInt(value, 10), value.endsWith('g') ? '#0f9212' : '#dc2b2d');
    });
});
```
